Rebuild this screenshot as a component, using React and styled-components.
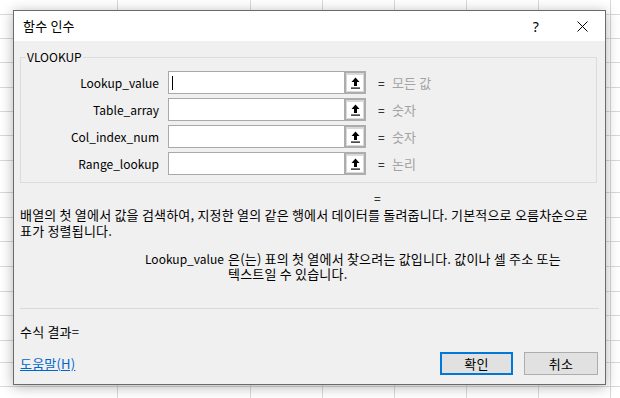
import React from 'react'
import styled, { createGlobalStyle } from 'styled-components'

const GRID = '#d9d9d9'
const COLS = [117, 250, 322, 394, 466, 538, 610]
const ROWS = [14, 38, 62, 87, 111, 135, 160, 192, 217, 241, 266, 291, 315, 340, 362, 386]

const lines = [
  ...COLS.map(x => `linear-gradient(${GRID}, ${GRID}) ${x}px 0 / 1px 100% no-repeat`),
  ...ROWS.map(y => `linear-gradient(${GRID}, ${GRID}) 0 ${y}px / 100% 1px no-repeat`)
].join(', ')

const GlobalStyle = createGlobalStyle`
  html, body {
    margin: 0;
    width: 620px;
    height: 398px;
    overflow: hidden;
  }
  body {
    background: ${lines}, #fff;
    font-family: "Noto Sans CJK KR", "Noto Sans", sans-serif;
    font-size: 13px;
    letter-spacing: 0.2px;
    color: #000;
  }
`

const StStage = styled.div`
  padding: 10px 0 0 13px;
`
const StDialog = styled.div`
  box-sizing: border-box;
  width: 593px;
  height: 375px;
  border: 1px solid #6b6b6b;
  box-shadow: 0 2px 12px rgba(0, 0, 0, 0.3);
  display: flex;
  flex-direction: column;
  background: #f0f0f0;
`
const StTitleBar = styled.div`
  height: 30px;
  flex: none;
  background: #fff;
  display: flex;
  align-items: center;
  padding-left: 9px;
`
const StTitle = styled.span`
  line-height: 16px;
`
const StTitleBtns = styled.div`
  margin-left: auto;
  display: flex;
  height: 100%;
`
const StTitleBtn = styled.div`
  width: 46px;
  height: 100%;
  display: flex;
  align-items: center;
  justify-content: center;
  font-family: "Noto Sans", sans-serif;
  font-size: 14px;
`
const StBody = styled.div`
  flex: 1;
  display: flex;
  flex-direction: column;
  padding: 0 8px 0 6px;
`
const StGroup = styled.fieldset`
  margin: 8px 0 0;
  padding: 6px 0 7px;
  border: 1px solid #dcdcdc;
  min-width: 0;
`
const StLegend = styled.legend`
  margin-left: 5px;
  padding: 0 1px;
  font-size: 12px;
  letter-spacing: 0;
  line-height: 16px;
`
const StRow = styled.div`
  display: flex;
  align-items: center;
  height: 23px;
  & + & {
    margin-top: 4px;
  }
`
const StLabel = styled.div`
  width: 138px;
  text-align: right;
  font-size: 12px;
  letter-spacing: 0;
`
const StControl = styled.div`
  margin-left: 9px;
  width: 198px;
  height: 23px;
  display: flex;
`
const StTextBox = styled.div`
  flex: 1;
  box-sizing: border-box;
  background: #fff;
  border: 1px solid #a9a9a9;
  border-right: none;
  display: flex;
  align-items: center;
  padding-left: 3px;
`
const StCaret = styled.span`
  width: 1px;
  height: 14px;
  background: #000;
`
const StRefBtn = styled.div`
  box-sizing: border-box;
  width: 22px;
  border: 2px solid #adadad;
  background: #d9d9d9;
  display: flex;
  align-items: center;
  justify-content: center;
`
const StRefFace = styled.div`
  width: 16px;
  height: 16px;
  background: #fff;
  display: flex;
  align-items: center;
  justify-content: center;
`
const StEq = styled.span`
  margin-left: 12px;
  font-size: 12px;
`
const StHint = styled.span`
  margin-left: 7px;
  color: #a3a3a3;
`
const StResultEq = styled.div`
  margin-top: 7px;
  padding-left: 354px;
  font-size: 12px;
  line-height: 16px;
`
const StDesc = styled.div`
  margin-top: 1px;
  display: flex;
  flex-direction: column;
`
const StDescLine = styled.div`
  height: 16px;
  line-height: 16px;
  white-space: nowrap;
`
const StArg = styled.div`
  margin-top: 12px;
  display: flex;
  padding-left: 125px;
  line-height: 15px;
`
const StArgName = styled.div`
  width: 83px;
  flex: none;
  font-size: 12px;
  letter-spacing: 0;
`
const StArgText = styled.div`
  width: 350px;
  word-break: keep-all;
`
const StSeparator = styled.div`
  margin: 27px -2px 0 0;
  height: 1px;
  background: #d9d9d9;
`
const StFormula = styled.div`
  margin-top: 15px;
  line-height: 16px;
`
const StFooter = styled.div`
  margin: 12px -1px 0 0;
  display: flex;
  align-items: center;
  gap: 11px;
`
const StLink = styled.a`
  margin-right: auto;
  color: #0066cc;
  text-decoration: underline;
`
const StButton = styled.button`
  box-sizing: border-box;
  width: ${p => (p.$primary ? 73 : 74)}px;
  height: 23px;
  padding: 0;
  background: #e1e1e1;
  border: ${p => (p.$primary ? '2px solid #0078d7' : '1px solid #adadad')};
  font: inherit;
  letter-spacing: inherit;
  color: #000;
`

const ArrowIcon = () => (
  <svg width='11' height='12' viewBox='0 0 11 12'>
    <path d='M5.5 0.5 L9.5 5 H7 V9 H4 V5 H1.5 Z' fill='#000' />
    <rect x='1' y='10.5' width='9' height='1.2' fill='#000' />
  </svg>
)

const CloseIcon = () => (
  <svg width='11' height='11' viewBox='0 0 11 11'>
    <path d='M0.5 0.5 L10.5 10.5 M10.5 0.5 L0.5 10.5' stroke='#000' strokeWidth='1' />
  </svg>
)

const args = [
  { name: 'Lookup_value', hint: '모든 값', active: true },
  { name: 'Table_array', hint: '숫자' },
  { name: 'Col_index_num', hint: '숫자' },
  { name: 'Range_lookup', hint: '논리' }
]

const App = () => (
  <StStage>
    <GlobalStyle />
    <StDialog>
      <StTitleBar>
        <StTitle>함수 인수</StTitle>
        <StTitleBtns>
          <StTitleBtn>?</StTitleBtn>
          <StTitleBtn>
            <CloseIcon />
          </StTitleBtn>
        </StTitleBtns>
      </StTitleBar>
      <StBody>
        <StGroup>
          <StLegend>VLOOKUP</StLegend>
          {args.map(a => (
            <StRow key={a.name}>
              <StLabel>{a.name}</StLabel>
              <StControl>
                <StTextBox>{a.active && <StCaret />}</StTextBox>
                <StRefBtn>
                  <StRefFace>
                    <ArrowIcon />
                  </StRefFace>
                </StRefBtn>
              </StControl>
              <StEq>=</StEq>
              <StHint>{a.hint}</StHint>
            </StRow>
          ))}
        </StGroup>
        <StResultEq>=</StResultEq>
        <StDesc>
          <StDescLine>
            배열의 첫 열에서 값을 검색하여, 지정한 열의 같은 행에서 데이터를 돌려줍니다. 기본적으로 오름차순으로
          </StDescLine>
          <StDescLine>표가 정렬됩니다.</StDescLine>
        </StDesc>
        <StArg>
          <StArgName>Lookup_value</StArgName>
          <StArgText>
            은(는) 표의 첫 열에서 찾으려는 값입니다. 값이나 셀 주소 또는 텍스트일 수 있습니다.
          </StArgText>
        </StArg>
        <StSeparator />
        <StFormula>수식 결과=</StFormula>
        <StFooter>
          <StLink>도움말(H)</StLink>
          <StButton $primary>확인</StButton>
          <StButton>취소</StButton>
        </StFooter>
      </StBody>
    </StDialog>
  </StStage>
)

export default App
